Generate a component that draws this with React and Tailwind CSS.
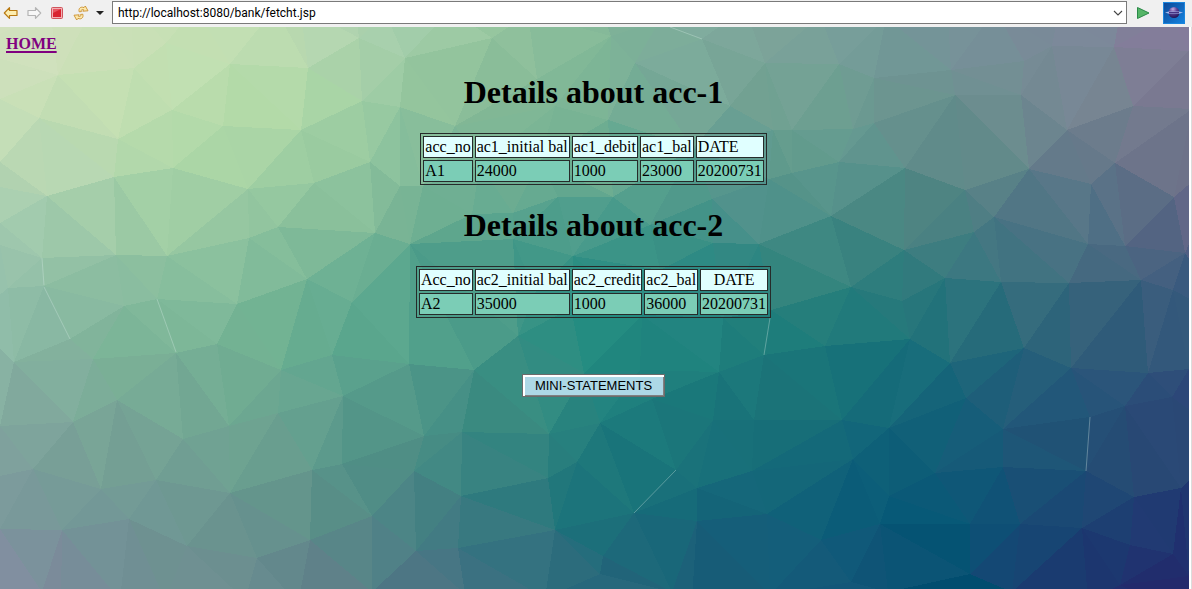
import React from "react";

const VERTICES = [
  // upper left
  [50, 8], [92, 8], [130, 2], [195, 8], [275, 8], [300, 6], [355, 8], [385, 12],
  [58, 75], [134, 68], [166, 43], [230, 64], [308, 68], [359, 38], [362, 101], [400, 107],
  [39, 118], [118, 139], [172, 110], [223, 126], [301, 130], [370, 162], [0, 99], [114, 177],
  [173, 168], [248, 189], [314, 183], [0, 162], [47, 196], [0, 187], [0, 223], [0, 245],
  [42, 258], [116, 255], [167, 256], [249, 238], [278, 227], [375, 233], [44, 286], [8, 288],
  [124, 306], [157, 299], [237, 304], [307, 279], [352, 302],
  // upper middle
  [492, 38], [405, 58], [455, 126], [528, 14], [537, 79], [611, 36], [635, 63], [608, 120],
  [555, 106], [660, 20], [702, 39], [765, 63], [730, 106], [773, 130], [613, 197], [558, 197],
  [712, 199], [769, 179], [759, 244], [713, 243], [573, 256], [513, 239], [513, 213], [410, 244],
  [400, 186], [472, 214], [423, 186], [693, 148], [535, 292], [571, 308], [450, 10], [600, 6], [745, 8], [480, 165], [540, 160], [650, 225], [660, 270],
  // upper right
  [839, 64], [874, 78], [886, 18], [951, 70], [948, 18], [955, 95], [1024, 61], [1052, 46],
  [1021, 95], [1114, 47], [1189, 51], [1133, 106], [1192, 109], [1067, 130], [1115, 163],
  [1029, 169], [1091, 184], [1174, 197], [853, 129], [874, 123], [839, 162], [905, 168],
  [965, 190], [831, 216], [904, 250], [974, 232], [994, 217], [1088, 244], [1125, 246],
  [851, 287], [902, 301], [945, 278], [1001, 282], [1069, 283], [1141, 280], [1173, 290],
  [1185, 253], [792, 130], [792, 173], [820, 16], [995, 10], [1058, 14], [1120, 14], [1170, 16],
  // lower left
  [14, 362], [70, 339], [93, 359], [176, 353], [217, 344], [281, 370], [332, 355], [73, 422],
  [117, 400], [183, 439], [229, 426], [278, 413], [343, 396], [33, 469], [101, 489], [156, 480],
  [230, 493], [312, 470], [342, 464], [372, 516], [62, 530], [129, 519], [187, 546], [257, 558],
  [310, 540], [0, 426], [0, 476], [0, 529], [42, 592], [61, 604], [120, 600], [165, 600],
  [245, 600], [298, 604], [372, 592],
  // lower middle
  [409, 364], [474, 370], [518, 336], [584, 373], [640, 370], [642, 315], [723, 318], [719, 372],
  [764, 355], [771, 310], [549, 434], [600, 423], [652, 399], [713, 420], [754, 420], [462, 432],
  [424, 436], [414, 471], [461, 496], [548, 478], [577, 462], [676, 470], [752, 471], [697, 488],
  [697, 521], [634, 513], [767, 514], [555, 530], [458, 548], [416, 551], [603, 556], [600, 574],
  [465, 594], [545, 598], [672, 592], [692, 600], [770, 595],
  // lower right
  [825, 346], [910, 339], [950, 363], [1024, 348], [1071, 368], [1148, 373], [1189, 369],
  [1172, 397], [1125, 406], [966, 398], [1003, 429], [1090, 417], [842, 420], [889, 428],
  [853, 459], [935, 473], [1003, 467], [1086, 471], [889, 496], [880, 524], [970, 524],
  [1020, 524], [1082, 528], [1134, 497], [1181, 488], [1130, 545], [1173, 554], [821, 540],
  [851, 582], [970, 574], [888, 592], [1012, 592], [1088, 600], [1120, 585], [1189, 576],
  // frame corners
  [-60, -20], [1250, -20], [-60, 650], [1250, 650], [-30, 50], [-30, 320], [1230, 320], [1230, 440], [1230, 150],
];

// Each row: y, then x/colour stops from left to right.
const COLOR_ROWS = [
  [40, "0 d3e2bf,100 cde1b9,200 c4e0b3,270 bddcb0,330 b3d5b0,400 a3cdaa,480 98c7a0,560 88bc9a,640 7db099,700 7fab9d,780 7ba298,850 789f9b,900 739898,960 77939a,1040 7a8a98,1100 7b8799,1140 827e99,1189 857d9c"],
  [100, "0 cce1bb,100 c3dfb1,200 bbdeae,260 b4dba8,330 a7d3a5,400 99c9a2,440 90c299,520 82b896,600 7ab395,680 78a998,760 72a193,830 70a193,900 6c9590,960 6c9090,1000 6e8e90,1060 748893,1120 76828f,1180 7a7890"],
  [160, "0 bcd9b3,80 b8d8b3,150 b0d8a9,240 a9d4a4,300 9fcea2,350 95c89f,400 87bf9c,460 7bb598,550 75b192,640 62a790,730 5b988f,790 609b8b,860 5f9690,920 5e8b89,990 628a8a,1050 647b8a,1110 67788a,1170 6c7289"],
  [220, "0 a3cab0,80 a3cdaa,140 9ecca5,220 9acaa3,280 8dc29d,340 86bd9a,400 78b395,460 62a98e,520 55a18d,600 4b9b8b,680 429487,750 4d8f8b,820 4b8e87,880 478681,940 4a8281,980 4d7c84,1040 4f7685,1100 507085,1140 566a84,1189 5a6085"],
  [280, "0 97c2ac,70 90bfa5,140 8abd9f,200 87be9d,260 80ba99,330 6eb094,400 5ba78f,460 53a08b,520 3f9687,590 2f8f83,680 2e8c85,740 2e8783,800 35857e,850 2c7f7c,900 2f7c7d,960 347780,1020 3b717f,1100 41667e,1150 44617e,1189 3c5b7f"],
  [340, "0 8bb9a6,70 83b39d,140 7cb698,210 78b495,270 70b293,330 5fa98f,400 55a48a,450 4c9b8a,520 3a9284,600 228b80,680 20847f,740 1f7e7b,800 1c7c7a,860 1b777a,930 1c7078,980 216b79,1040 2b667a,1100 2f5f7a,1160 32587a"],
  [400, "0 85aaa0,60 80ac9d,110 7aac97,180 75a995,240 70aa93,300 68a591,350 599b8c,400 549a8a,440 4b9387,500 3a8c80,560 2f8880,620 1f807e,680 1c7a7b,730 1a747a,790 1b7378,850 166c7a,910 146a7a,960 17607a,1020 225c7a,1070 24577a,1120 294f78,1180 2c4778"],
  [460, "0 7fa09d,60 79a098,120 759f95,190 709f92,250 6ea291,300 649b8e,350 549488,400 4f8e86,440 428a83,510 338280,570 247c7c,630 1b777b,700 1a727a,750 166e7a,800 146978,860 0f637a,910 0e5e78,970 135977,1040 1e5375,1100 234d74,1150 284873"],
  [520, "0 7b979c,60 759798,120 719796,190 6e9792,250 67938e,310 5e9089,360 538b87,420 467f84,500 35787f,560 1d747b,630 16707a,680 166979,740 135f79,800 12607a,850 0b5b79,910 055876,1000 0d5076,1050 174974,1100 1c4272,1150 203c73,1189 1e3070"],
  [575, "0 818fa0,60 7a8b99,110 738f98,160 6f9092,220 6d8e90,270 678b8f,330 5f8189,380 527d87,430 4d7585,500 387080,570 2e6b7d,620 23657a,690 1c6079,740 165a78,790 135a77,850 135679,900 0e5274,950 005070,1000 144572,1060 1a3b70,1120 1e3270,1180 232a6c"],
].map(([y, stops]) => ({
  pos: y,
  stops: stops.split(",").map((s) => {
    const [x, hex] = s.split(" ");
    return { pos: Number(x), rgb: [0, 2, 4].map((i) => parseInt(hex.slice(i, i + 2), 16)) };
  }),
}));

const mix = (a, b, t) => a.map((v, i) => v + (b[i] - v) * t);

function bracket(list, p) {
  let i = 0;
  while (i < list.length - 2 && list[i + 1].pos < p) i++;
  const t = (p - list[i].pos) / (list[i + 1].pos - list[i].pos);
  return [list[i], list[i + 1], Math.max(0, Math.min(1, t))];
}

function colorAt(x, y, shade) {
  const rowColor = (row) => {
    const [a, b, t] = bracket(row.stops, x);
    return mix(a.rgb, b.rgb, t);
  };
  const [r0, r1, t] = bracket(COLOR_ROWS, y);
  const rgb = mix(rowColor(r0), rowColor(r1), t).map((v) => Math.max(0, Math.round(v + shade)));
  return `rgb(${rgb.join(",")})`;
}

function circumcircle(a, b, c) {
  const d = 2 * (a[0] * (b[1] - c[1]) + b[0] * (c[1] - a[1]) + c[0] * (a[1] - b[1]));
  const sq = (p) => p[0] * p[0] + p[1] * p[1];
  const x = (sq(a) * (b[1] - c[1]) + sq(b) * (c[1] - a[1]) + sq(c) * (a[1] - b[1])) / d;
  const y = (sq(a) * (c[0] - b[0]) + sq(b) * (a[0] - c[0]) + sq(c) * (b[0] - a[0])) / d;
  return { x, y, r: (a[0] - x) ** 2 + (a[1] - y) ** 2 };
}

function triangulate(points) {
  const n = points.length;
  const pts = [...points, [-9000, -8000], [9500, -8100], [400, 9900]];
  const make = (i, j, k) => ({ v: [i, j, k], c: circumcircle(pts[i], pts[j], pts[k]) });
  let tris = [make(n, n + 1, n + 2)];
  for (let p = 0; p < n; p++) {
    const edges = new Map();
    tris = tris.filter(({ v, c }) => {
      if ((pts[p][0] - c.x) ** 2 + (pts[p][1] - c.y) ** 2 >= c.r) return true;
      [[v[0], v[1]], [v[1], v[2]], [v[2], v[0]]].forEach(([a, b]) => {
        const key = a < b ? `${a}-${b}` : `${b}-${a}`;
        if (edges.has(key)) edges.delete(key);
        else edges.set(key, [a, b]);
      });
      return false;
    });
    edges.forEach(([a, b]) => tris.push(make(a, b, p)));
  }
  return tris.filter(({ v }) => v.every((i) => i < n)).map(({ v }) => v.map((i) => pts[i]));
}

const FACETS = triangulate(VERTICES).map((t) => {
  const cx = (t[0][0] + t[1][0] + t[2][0]) / 3;
  const cy = (t[0][1] + t[1][1] + t[2][1]) / 3;
  const shade = ((Math.round(cx * 7 + cy * 13) % 7) - 3) * 0.4;
  return { points: t.map((p) => p.join(",")).join(" "), fill: colorAt(cx, cy, shade) };
});

const GLINTS = [
  [42, 258, 44, 285], [44, 287, 70, 339], [157, 299, 176, 352], [670, 27, 702, 39],
  [770, 318, 764, 355], [676, 470, 634, 513], [1090, 417, 1086, 471],
];

function PolygonBackdrop() {
  return (
    <svg aria-hidden="true" viewBox="0 27 1189 562" preserveAspectRatio="xMidYMid slice" className="absolute inset-0 h-full w-full">
      <g shapeRendering="crispEdges">
        {FACETS.map((f, i) => (
          <polygon key={i} points={f.points} fill={f.fill} />
        ))}
      </g>
      {GLINTS.map(([x1, y1, x2, y2], i) => (
        <line key={i} x1={x1} y1={y1} x2={x2} y2={y2} stroke="#d8ece4" strokeOpacity="0.5" strokeWidth="0.7" />
      ))}
    </svg>
  );
}

function ArrowIcon({ forward = false }) {
  const stroke = forward ? "#b4b4b4" : "#b97a12";
  return (
    <svg width="16" height="16" viewBox="0 0 16 16" className={forward ? "-scale-x-100" : ""}>
      <path d="M1.300 8 6.500 2.700V5.500h7.500v5H6.500v2.800Z" fill={forward ? "#f7f7f7" : "#fdeeb0"} stroke={stroke} strokeWidth="1.2" strokeLinejoin="round" />
    </svg>
  );
}

function StopIcon() {
  return (
    <svg width="16" height="16" viewBox="0 0 16 16">
      <rect x="2.5" y="2.5" width="11" height="11" rx="1" fill="#f2b0b4" stroke="#d0545c" />
      <rect x="4" y="4" width="8" height="8" fill="#d9222f" />
      <path d="M4 8V4h8Z" fill="#e85560" />
    </svg>
  );
}

function RefreshIcon() {
  return (
    <svg width="16" height="16" viewBox="0 0 16 16" fill="#fde9ac" stroke="#c98f2c" strokeWidth="0.9" strokeLinejoin="round">
      <path d="M6.200 6.800C5.200 3.500 7.500 1.200 11 2.600L12.300 1 15 5.800 9.800 6.200 10.600 4.700C8.800 4 7.800 5 8.400 6.600Z" />
      <path d="M9.800 9.200C10.800 12.500 8.500 14.800 5 13.400L3.700 15 1 10.200 6.200 9.800 5.400 11.300C7.200 12 8.200 11 7.600 9.400Z" />
    </svg>
  );
}

function BrowserIcon() {
  return (
    <svg width="22" height="22" viewBox="0 0 22 22">
      <defs>
        <radialGradient id="orb" cx="0.4" cy="0.2" r="0.8">
          <stop offset="0" stopColor="#c3addf" />
          <stop offset="0.45" stopColor="#5b3f95" />
          <stop offset="1" stopColor="#241455" />
        </radialGradient>
        <linearGradient id="sky" x1="0" y1="0" x2="1" y2="1">
          <stop offset="0" stopColor="#0c4796" />
          <stop offset="1" stopColor="#1684e0" />
        </linearGradient>
      </defs>
      <rect x="0.500" y="0.500" width="21" height="21" fill="url(#sky)" stroke="#1b86dd" />
      <circle cx="11" cy="10.500" r="5.500" fill="url(#orb)" />
      <path d="M2 10.500 6 9.600H16L20 10.500 16 11.800H6Z" fill="#a9b8ea" />
      <path d="M6 10.700h10" stroke="#3a2478" strokeWidth="1.200" />
    </svg>
  );
}

function Toolbar() {
  return (
    <header className="flex h-[27px] shrink-0 items-center bg-[#f0f0f0] pb-[2px] pl-[3px] pr-[7px]">
      <div className="flex items-center gap-[7px]">
        <button type="button" aria-label="Back"><ArrowIcon /></button>
        <button type="button" aria-label="Forward"><ArrowIcon forward /></button>
        <button type="button" aria-label="Stop"><StopIcon /></button>
        <button type="button" aria-label="Refresh" className="ml-px"><RefreshIcon /></button>
        <button type="button" aria-label="Refresh options">
          <svg width="8" height="16" viewBox="0 0 8 16"><path d="M0 6h8L4 10Z" fill="#222" /></svg>
        </button>
      </div>
      <div className="ml-2 flex h-[23px] flex-1 items-center border border-[#7a7a7a] bg-white">
        <input
          aria-label="Address"
          defaultValue="http://localhost:8080/bank/fetcht.jsp"
          className="h-full min-w-0 flex-1 bg-transparent pl-[5px] font-[Roboto,sans-serif] text-[12px] text-black outline-none"
        />
        <button type="button" aria-label="Show history" className="px-[3px]">
          <svg width="10" height="8" viewBox="0 0 10 8"><path d="M1 2l4 4 4-4" fill="none" stroke="#444" strokeWidth="1.100" /></svg>
        </button>
      </div>
      <button type="button" aria-label="Go" className="ml-2">
        <svg width="16" height="16" viewBox="0 0 16 16"><path d="M2.500 2.500 14 8 2.500 13.500Z" fill="#55b567" stroke="#2a8a48" strokeLinejoin="round" /></svg>
      </button>
      <button type="button" aria-label="Open external browser" className="ml-3"><BrowserIcon /></button>
    </header>
  );
}

function AccountTable({ title, columns, values, dateAlign }) {
  return (
    <section className="flex flex-col items-center">
      <h1 className="text-[32px] font-bold leading-[37px]">{title}</h1>
      <table aria-label={title} className="mt-[22px] border-separate border-spacing-[2px] border border-[#262b2a] text-[16px] leading-[18px]">
        <thead>
          <tr className="bg-[#e0ffff]">
            {columns.map((c) => (
              <th key={c} scope="col" className={`border border-[#262b2a] p-px font-normal ${c === "DATE" ? dateAlign : "text-left"}`}>{c}</th>
            ))}
          </tr>
        </thead>
        <tbody>
          <tr className="bg-[#7bcdb6]">
            {values.map((v, i) => (
              <td key={i} className="border border-[#262b2a] p-px">{v}</td>
            ))}
          </tr>
        </tbody>
      </table>
    </section>
  );
}

export default function App() {
  return (
    <div className="flex min-h-screen flex-col bg-white">
      <Toolbar />
      <div className="flex flex-1 border-r border-[#dcdcdc] pr-[2px]">
        <main className="relative flex-1 overflow-hidden font-['Liberation_Serif',serif] text-black">
          <PolygonBackdrop />
          <div className="relative flex flex-col pb-8 pl-[6px] pr-2 pt-2">
            <a href="#home" className="self-start text-[16px] font-bold leading-[18px] text-[#800080] underline decoration-2 underline-offset-2">HOME</a>
            <div className="mt-[21px] flex flex-col items-center gap-[22px]">
              <AccountTable
                title="Details about acc-1"
                columns={["acc_no", "ac1_initial bal", "ac1_debit", "ac1_bal", "DATE"]}
                values={["A1", "24000", "1000", "23000", "20200731"]}
                dateAlign="text-left"
              />
              <AccountTable
                title="Details about acc-2"
                columns={["Acc_no", "ac2_initial bal", "ac2_credit", "ac2_bal", "DATE"]}
                values={["A2", "35000", "1000", "36000", "20200731"]}
                dateAlign="text-center"
              />
            </div>
            <button
              type="button"
              className="mt-14 self-center border border-[#6b6b6b] bg-[#add8e6] px-3 font-['Liberation_Sans',sans-serif] text-[13px] leading-[21px] shadow-[inset_2px_2px_0_#ffffff,inset_-1px_-1px_0_#808080]"
            >
              MINI-STATEMENTS
            </button>
          </div>
        </main>
      </div>
    </div>
  );
}
